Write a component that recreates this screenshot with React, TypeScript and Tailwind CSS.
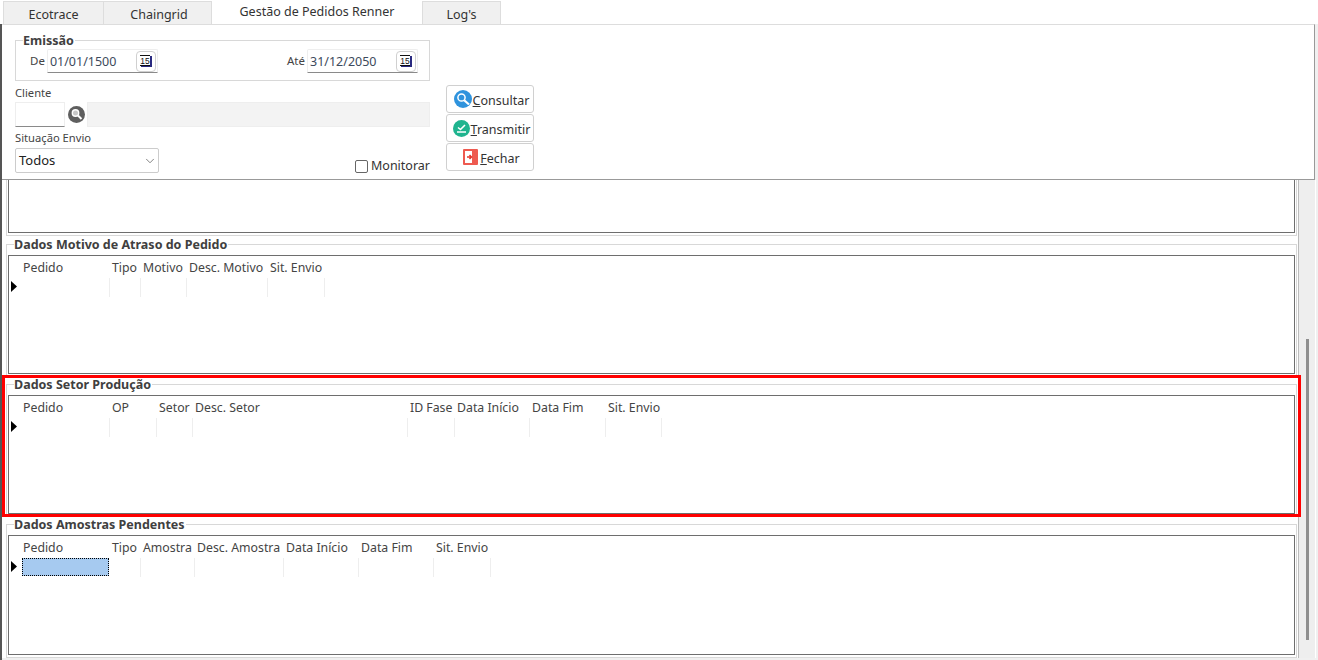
import { ChevronDown } from "lucide-react";
import type { ReactNode } from "react";

interface Column {
  title: string;
  width: number;
}

const motivoColumns: Column[] = [
  { title: "Pedido", width: 90 },
  { title: "Tipo", width: 31 },
  { title: "Motivo", width: 46 },
  { title: "Desc. Motivo", width: 81 },
  { title: "Sit. Envio", width: 57 },
];

const setorColumns: Column[] = [
  { title: "Pedido", width: 90 },
  { title: "OP", width: 47 },
  { title: "Setor", width: 36 },
  { title: "Desc. Setor", width: 215 },
  { title: "ID Fase", width: 47 },
  { title: "Data Início", width: 75 },
  { title: "Data Fim", width: 76 },
  { title: "Sit. Envio", width: 56 },
];

const amostraColumns: Column[] = [
  { title: "Pedido", width: 90 },
  { title: "Tipo", width: 31 },
  { title: "Amostra", width: 54 },
  { title: "Desc. Amostra", width: 89 },
  { title: "Data Início", width: 75 },
  { title: "Data Fim", width: 75 },
  { title: "Sit. Envio", width: 57 },
];

function CalendarIcon() {
  return (
    <svg width="14" height="14" viewBox="0 0 14 14">
      <rect x="11" y="2" width="2" height="11" fill="#2a2a80" />
      <rect x="2" y="11" width="11" height="2" fill="#2a2a80" />
      <rect x="1" y="1" width="10" height="1" fill="#111" />
      <rect x="1" y="11" width="10" height="1" fill="#111" />
      <text x="6" y="10" textAnchor="middle" fontSize="8.5" fill="#111" fontFamily="Liberation Sans, sans-serif">
        15
      </text>
    </svg>
  );
}

function DateField({ value }: { value: string }) {
  return (
    <div className="flex h-[24px] w-[111px] items-center justify-between rounded-t-[2px] border border-[#eeeeee] border-b-[#8a8a8a] pl-[2px] pr-[1px]">
      <span className="pt-[2px] text-[12.5px] text-[#3d4a5c]">{value}</span>
      <span className="flex h-[21px] w-[20px] items-center justify-center rounded-[4px] border border-[#d0d0d0]">
        <CalendarIcon />
      </span>
    </div>
  );
}

function ActionButton({ icon, mnemonic, rest }: { icon: ReactNode; mnemonic: string; rest: string }) {
  return (
    <button className="flex h-[28px] w-[88px] items-center justify-center gap-[1px] rounded-[3px] border border-[#d0d0d0] bg-white pl-[3px] text-[12.5px] text-[#333]">
      {icon}
      <span className="pt-[5px]">
        <span className="underline">{mnemonic}</span>
        {rest}
      </span>
    </button>
  );
}

function DataGrid({ columns, selected }: { columns: Column[]; selected?: boolean }) {
  return (
    <div className="flex-1 border border-[#6e6e6e] bg-white">
      <div className="flex h-[22px] pl-[11px] pt-[4px]">
        {columns.map((col, i) => (
          <div
            key={col.title}
            className={`whitespace-nowrap text-[12.3px] leading-[16px] text-[#444] ${i === 0 ? "pl-[3px]" : "pl-[2px]"}`}
            style={{ width: col.width }}
          >
            {col.title}
          </div>
        ))}
      </div>
      <div className="flex h-[19px]">
        <div className="flex w-[11px] pl-[2px] pt-[3px]">
          <svg width="6" height="11" viewBox="0 0 6 11">
            <path d="M0 0 L6 5.5 L0 11 Z" fill="#000" />
          </svg>
        </div>
        {columns.map((col, i) =>
          selected && i === 0 ? (
            <div key={col.title} className="pb-[1px] pl-[2px] pr-[1px]" style={{ width: col.width }}>
              <div className="h-full border border-dotted border-black bg-[#a6caf0]" />
            </div>
          ) : (
            <div key={col.title} className="border-r border-[#eeeeee]" style={{ width: col.width }} />
          )
        )}
      </div>
    </div>
  );
}

function GroupFrame({ title, className, children }: { title: string; className: string; children: ReactNode }) {
  return (
    <div className={`relative flex flex-col border border-[#d8d8d8] px-[1px] pb-[2px] ${className}`}>
      <div className="-mt-[8px] ml-[6px] h-[18px] w-fit bg-white pr-[1px] text-[12.5px] font-bold leading-[15px] text-[#404040]">
        {title}
      </div>
      {children}
    </div>
  );
}

export default function App() {
  return (
    <div className="flex h-[660px] w-[1318px] flex-col overflow-hidden bg-[#f0f0f0] font-['Noto_Sans',sans-serif]">
      {/* Tabs */}
      <div className="flex h-[24px] bg-white pl-[3px] text-[12.5px] text-[#333]">
        <div className="mt-[1px] flex w-[101px] items-center justify-center border border-b-0 border-[#dddddd] bg-[#f0f0f0] pt-[4px]">Ecotrace</div>
        <div className="mt-[1px] flex w-[108px] items-center justify-center border border-b-0 border-l-0 border-[#dddddd] bg-[#f0f0f0] pl-[3px] pt-[4px]">Chaingrid</div>
        <div className="flex w-[210px] items-center justify-center bg-white">Gestão de Pedidos Renner</div>
        <div className="mt-[1px] flex w-[79px] items-center justify-center border border-b-0 border-[#dddddd] bg-[#f0f0f0] pt-[4px]">Log's</div>
      </div>

      <div className="flex flex-1 flex-col border-l-2 border-[#555]">
        {/* Filter panel */}
        <div className="flex h-[156px] w-[1313px] border-b border-r border-t border-b-[#999] border-r-[#999] border-t-[#dddddd] bg-white pl-[13px] pt-[15px]">
          <div className="w-[415px] text-[11.2px] text-[#444]">
            <div className="h-[41px] border border-[#d8d8d8]">
              <div className="-mt-[7px] ml-[7px] h-[14px] w-fit bg-white pr-[1px] text-[12.5px] font-bold leading-[14px] text-[#404040]">Emissão</div>
              <div className="mt-[1px] flex items-center justify-between pl-[14px] pr-[11px] text-[11.5px]">
                <div className="flex items-center gap-[2px]">
                  <span>De</span>
                  <DateField value="01/01/1500" />
                </div>
                <div className="flex items-center gap-[2px]">
                  <span>Até</span>
                  <DateField value="31/12/2050" />
                </div>
              </div>
            </div>
            <div className="mt-[5px] h-[16px] leading-[14px]">Cliente</div>
            <div className="flex h-[25px] items-center">
              <div className="h-full w-[50px] border border-[#eeeeee] border-b-[#8a8a8a]" />
              <svg className="ml-[3px]" width="17" height="17" viewBox="0 0 17 17">
                <circle cx="8.5" cy="8.5" r="8.5" fill="#5f5f5f" />
                <circle cx="7.5" cy="7" r="3.2" fill="#c8c8c8" stroke="#fff" strokeWidth="1.4" />
                <path d="M10 9.5 L13.5 13" stroke="#fff" strokeWidth="2" />
              </svg>
              <div className="ml-[2px] h-full flex-1 border border-[#eeeeee] bg-[#f3f3f3]" />
            </div>
            <div className="mt-[3px] h-[16px] leading-[16px]">Situação Envio</div>
            <div className="flex items-end justify-between">
              <div className="mt-[2px] flex h-[25px] w-[144px] items-center justify-between rounded-[2px] border border-[#cccccc] pl-[3px] pr-[1px]">
                <span className="text-[13px] text-[#222]">Todos</span>
                <ChevronDown size={14} strokeWidth={1.25} className="text-[#555]" />
              </div>
              <label className="-mb-[1px] flex items-center gap-[3px] text-[12.5px] leading-[16px] text-[#333]">
                <span className="h-[13px] w-[13px] rounded-[2px] border border-[#666]" />
                Monitorar
              </label>
            </div>
          </div>

          <div className="ml-[16px] flex flex-col gap-[1px] pt-[45px]">
            <ActionButton
              mnemonic="C"
              rest="onsultar"
              icon={
                <svg width="18" height="18" viewBox="0 0 18 18">
                  <circle cx="9" cy="9" r="9" fill="#2f93dd" />
                  <circle cx="7.5" cy="7.5" r="3.6" fill="#2f93dd" stroke="#fff" strokeWidth="1.5" />
                  <path d="M10.2 10.2 L15 14.5" stroke="#fff" strokeWidth="2.2" />
                </svg>
              }
            />
            <ActionButton
              mnemonic="T"
              rest="ransmitir"
              icon={
                <svg width="17" height="17" viewBox="0 0 17 17">
                  <circle cx="8.5" cy="8.5" r="8.5" fill="#1fb48f" />
                  <path d="M5 7.5 L7.5 9.5 L12 5" fill="none" stroke="#fff" strokeWidth="1.6" />
                  <path d="M4 12 H13" stroke="#fff" strokeWidth="1.5" />
                </svg>
              }
            />
            <ActionButton
              mnemonic="F"
              rest="echar"
              icon={
                <svg className="mr-[1px]" width="15" height="16" viewBox="0 0 15 16">
                  <rect width="15" height="16" rx="1" fill="#ee5a50" />
                  <rect x="2" y="2" width="7" height="12" fill="#fff" />
                  <path d="M4 8 H8 M6.5 6 L8.5 8 L6.5 10" fill="none" stroke="#e2362c" strokeWidth="1.5" />
                </svg>
              }
            />
          </div>
        </div>

        {/* Scrolled content */}
        <div className="flex h-[478px]">
          <div className="flex w-[1296px] flex-col bg-white pl-[4px]">
            <div className="h-[56px] w-[1291px] border-b border-l border-r border-[#d8d8d8] px-[1px] pb-[2px]">
              <div className="h-full border-b border-l border-r border-[#6e6e6e]" />
            </div>
            <div className="mt-[8px] flex w-[1291px] flex-col gap-[7px]">
              <GroupFrame title="Dados Motivo de Atraso do Pedido" className="h-[133px]">
                <DataGrid columns={motivoColumns} />
              </GroupFrame>
              <GroupFrame title="Dados Setor Produção" className="h-[133px]">
                <DataGrid columns={setorColumns} />
                <div className="pointer-events-none absolute -bottom-[1px] -left-[5px] -right-[5px] -top-[10px] border-[3px] border-[#ff0000]" />
              </GroupFrame>
              <GroupFrame title="Dados Amostras Pendentes" className="h-[134px]">
                <DataGrid columns={amostraColumns} selected />
              </GroupFrame>
            </div>
          </div>
          {/* Scrollbar */}
          <div className="w-[18px] border-l border-r border-l-[#bbbbbb] border-r-white bg-[#eeeeee] pl-[7px] pt-[159px]">
            <div className="h-[301px] w-[3px] bg-[#8f8f8f]" />
          </div>
        </div>
      </div>
    </div>
  );
}
